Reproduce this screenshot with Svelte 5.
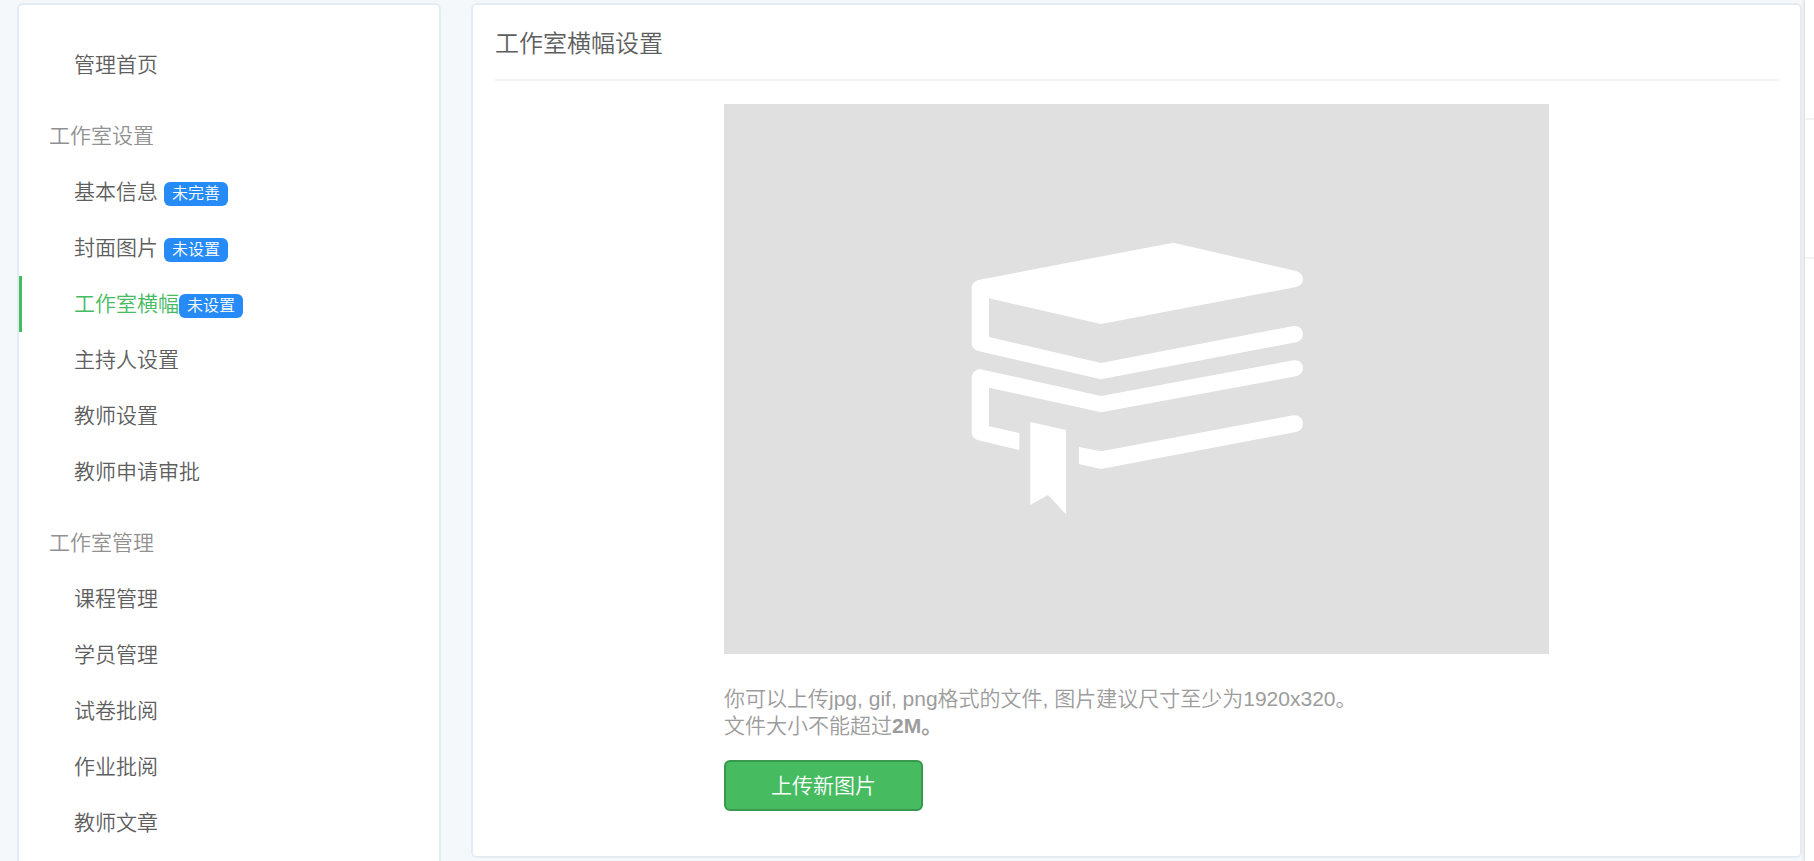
<script lang="ts">
  interface MenuItem {
    label: string;
    badge?: string;
    spaced?: boolean;
    active?: boolean;
  }

  interface MenuGroup {
    title?: string;
    items: MenuItem[];
  }

  const groups: MenuGroup[] = [
    { items: [{ label: '管理首页' }] },
    {
      title: '工作室设置',
      items: [
        { label: '基本信息', badge: '未完善', spaced: true },
        { label: '封面图片', badge: '未设置', spaced: true },
        { label: '工作室横幅', badge: '未设置', active: true },
        { label: '主持人设置' },
        { label: '教师设置' },
        { label: '教师申请审批' }
      ]
    },
    {
      title: '工作室管理',
      items: [
        { label: '课程管理' },
        { label: '学员管理' },
        { label: '试卷批阅' },
        { label: '作业批阅' },
        { label: '教师文章' }
      ]
    }
  ];
</script>

<div class="page">
  <nav class="card sidebar">
    {#each groups as group}
      <section class="group">
        {#if group.title}
          <h2 class="group-title">{group.title}</h2>
        {/if}
        <ul>
          {#each group.items as item}
            <li>
              <a
                href="#menu"
                class="menu-link"
                class:active={item.active}
                aria-current={item.active ? 'page' : undefined}
              >
                <span>{item.label}</span>
                {#if item.badge}
                  <span class="badge" class:spaced={item.spaced}>{item.badge}</span>
                {/if}
              </a>
            </li>
          {/each}
        </ul>
      </section>
    {/each}
  </nav>

  <main class="card content">
    <h1>工作室横幅设置</h1>
    <div class="banner">
      <svg class="cover" viewBox="-678 -348 2475 1650" role="img" aria-label="横幅">
        <g fill="#fff">
          <path
            fill-rule="evenodd"
            d="M670 68 L1038 153 Q1059 160 1059 177 Q1059 194 1038 201 L453 312 L117 235 V351 L453 429 L1030 318 Q1045 317 1052 325 Q1059 333 1059 342 Q1059 361 1038 367 L453 478 L85 393 Q65 386 65 368 V205 Q65 187 85 180 Z"
          />
          <path
            d="M88 447 L453 528 L1030 421 Q1044 419 1052 427 Q1059 435 1059 444 Q1059 462 1038 469 L453 577 L117 503 V619 L208 639 V690 L85 661 Q65 654 65 637 V474 Q65 453 88 447 Z"
          />
          <path
            d="M387 681 L453 694 L1030 586 Q1044 585 1052 593 Q1059 601 1059 611 Q1059 629 1038 636 L453 747 L387 732 Z"
          />
          <path d="M241 606 L348 630 V883 L294 825 L241 855 Z" />
        </g>
      </svg>
      <p class="hint">
        你可以上传jpg, gif, png格式的文件, 图片建议尺寸至少为1920x320。<br />
        文件大小不能超过<strong>2M。</strong>
      </p>
      <button type="button" class="upload">上传新图片</button>
    </div>
  </main>
</div>

<aside class="drawer">
  <div class="drawer-cell first"></div>
  <div class="drawer-cell"></div>
</aside>

<style>
  :global(body) {
    background: #f4f8fb;
    overflow: hidden;
  }

  .page {
    display: flex;
    align-items: flex-start;
    gap: 30px;
    height: 100vh;
    padding: 3px 12px 0 17px;
    box-sizing: border-box;
    overflow: hidden;
    color: #5e5e5e;
    font-family: 'Liberation Sans', 'Noto Sans CJK SC', sans-serif;
    font-size: 21px;
    font-weight: 350;
    line-height: 27px;
  }

  .card {
    box-sizing: border-box;
    background: #fff;
    border: 2px solid #e4ecf3;
    border-radius: 6px;
  }

  .sidebar {
    flex: 0 0 424px;
    padding: 32px 0;
  }

  .group + .group {
    margin-top: 15px;
  }

  .group-title {
    margin: 0;
    padding: 0 30px;
    color: #919191;
    font-size: 21px;
    font-weight: inherit;
    line-height: 56px;
  }

  ul {
    margin: 0;
    padding: 0;
    list-style: none;
  }

  .menu-link {
    display: flex;
    align-items: baseline;
    padding: 0 52px;
    border-left: 3px solid transparent;
    color: inherit;
    line-height: 56px;
    text-decoration: none;
  }

  .menu-link.active {
    border-left-color: #46bb5f;
    color: #46bb5f;
  }

  .badge {
    padding: 0 8px;
    border-radius: 6px;
    background: #278bf7;
    color: #fff;
    font-size: 16px;
    line-height: 24px;
  }

  .badge.spaced {
    margin-left: 6px;
  }

  .content {
    flex: 1;
    min-width: 0;
    padding: 3px 22px 45px;
  }

  h1 {
    margin: 0 0 23px;
    border-bottom: 2px solid #f3f3f3;
    font-size: 24px;
    font-weight: inherit;
    line-height: 71px;
  }

  .banner {
    width: 64.3%;
    margin: 0 auto;
  }

  .cover {
    display: block;
    width: 100%;
    aspect-ratio: 3 / 2;
    background: #e0e0e0;
  }

  .hint {
    margin: 31px 0 21px;
    color: #9c9c9c;
  }

  .hint strong {
    font-weight: 700;
  }

  .upload {
    padding: 10px 45px;
    border: 2px solid #38994e;
    border-radius: 6px;
    background: #46bb5f;
    color: #fff;
    font: inherit;
    cursor: pointer;
  }

  /* Edge of the side panel that overlaps the page */
  .drawer {
    position: fixed;
    top: 0;
    right: 0;
    bottom: 0;
    width: 9px;
    background: #fff;
    box-shadow: 0 0 4px rgba(0, 0, 0, 0.2);
  }

  .drawer-cell {
    height: 137px;
    border-bottom: 2px solid #f3f3f3;
  }

  .drawer-cell.first {
    height: 118px;
  }
</style>
